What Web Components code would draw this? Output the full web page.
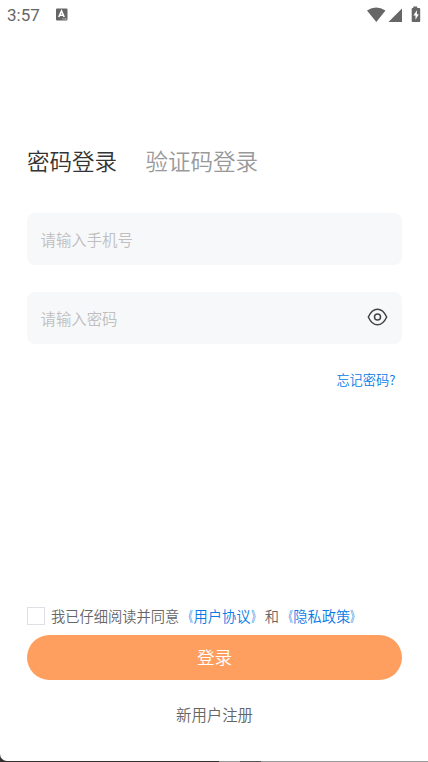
<!DOCTYPE html>
<html lang="zh-CN">
<head>
<meta charset="utf-8">
<title>密码登录</title>
<style>
html{background:#fff}
body{margin:0;width:428px;height:762px;overflow:hidden;font-family:"Noto Sans CJK SC DemiLight","Noto Sans CJK SC",sans-serif;font-weight:350}
</style>
</head>
<body>
<login-screen></login-screen>
<script>
function define(name, html) {
  const template = document.createElement('template');
  template.innerHTML = html.trim();
  customElements.define(name, class extends HTMLElement {
    constructor() {
      super();
      this.attachShadow({mode: 'open'}).append(template.content.cloneNode(true));
    }
  });
}

define('status-bar', `
<style>
:host{display:flex;align-items:center;height:30px;box-sizing:border-box;padding:0 7px 0 7px;color:#666}
time{font:400 17px/30px Roboto,sans-serif;width:49px;letter-spacing:0}
svg{display:block;fill:#666;margin-top:-1px}
.spacer{flex:1}
</style>
<time>3:57</time>
<svg width="12" height="13" viewBox="0 0 12 13"><rect y=".5" width="11.500" height="12" rx="1"/><path d="M2.800 9 5.500 3l2.700 6M3.800 7.300h3.400" fill="none" stroke="#fff" stroke-width="1.600"/><path d="M6.500 11h1M8.500 11h2" stroke="#ddd"/></svg>
<span class="spacer"></span>
<svg width="54" height="18" viewBox="0 0 54 18"><path d="M0 4.500Q9-1.500 18.500 4.500L9.300 16Z"/><path d="M35 2.500v13.500H21.500Z"/><path d="M46.300 2V.5h3.900V2h2.200q.8 0 .8.900v12.200q0 .9-.8.900h-6.900q-.8 0-.8-.9V2.900q0-.9.800-.9Z"/><path d="m49.900 4.300-3.500 5.300h2.100v4.200l3.300-5.600h-1.900Z" fill="#fff"/></svg>
`);

define('login-tabs', `
<style>
:host{display:flex;gap:28.500px;font-size:22.500px;line-height:34px;color:#999}
::slotted([active]){color:#333}
</style>
<slot></slot>`);

define('form-field', `
<style>
:host{display:flex;align-items:center;height:52px;box-sizing:border-box;padding:0 14px 0 13.500px;border-radius:8px;background:#f7f8fa;color:#bfbfbf;font-size:15.400px;line-height:24px}
.hint{flex:1}
</style>
<span class="hint"><slot></slot></span><slot name="action"></slot>`);

define('eye-icon', `
<style>:host{display:block;height:20px;margin-top:-2px}svg{display:block}</style>
<svg width="21" height="20" viewBox="0 0 21 20" fill="none" stroke="#444" stroke-width="1.500" stroke-linejoin="round"><path d="M1.300 10C3.600 5 7 2.200 10.500 2.200S17.400 5 19.700 10C17.400 15 14 17.800 10.500 17.800S3.600 15 1.300 10Z"/><circle cx="10.500" cy="10" r="3"/></svg>`);

define('text-link', `<style>:host{display:inline;color:#0a7be6}</style><slot></slot>`);

define('agreement-row', `
<style>
:host{display:flex;align-items:center;height:22px;font-size:14.250px;line-height:22px;color:#666;white-space:nowrap;text-spacing-trim:space-all}
i{box-sizing:border-box;width:18px;height:18px;border:1px solid #dfdfe5;margin-right:6px;flex:none}
</style>
<i></i><span><slot></slot></span>`);

define('policy-link', `
<style>
:host{display:inline;color:#0a7be6}
span{display:inline-block;transform:scaleX(.62)}
.open{transform-origin:94% 50%}
.close{transform-origin:6% 50%}
</style><span class="open">《</span><slot></slot><span class="close">》</span>`);

define('primary-button', `
<style>
:host{display:flex;align-items:center;justify-content:center;height:45px;border-radius:23px;background:#ff9f5f;color:#fff;font-size:17.600px;line-height:26px;box-sizing:border-box;padding-bottom:1px}
</style>
<slot></slot>`);

define('login-screen', `
<style>
:host{display:flex;flex-direction:column;width:428px;height:762px;background:linear-gradient(90deg,#33302f 0 219px,#999 219px 240px,#555 240px 261px,#999 261px)}
.page{display:flex;flex-direction:column;height:761px;background:#fff;border-radius:0 0 0 7px}
main{display:flex;flex-direction:column;flex:1;padding:113px 26px 0 27px}
login-tabs{margin-bottom:36px}
.second{margin-top:27px}
.forgot{align-self:flex-end;margin:26px 6.700px 0 0;font-size:13.200px;line-height:20px}
agreement-row{margin-top:215px}
primary-button{margin-top:8px}
.register{align-self:center;margin-top:22px;font-size:15.400px;line-height:24px;color:#666}
</style>
<div class="page">
<status-bar></status-bar>
<main>
<login-tabs><span active>密码登录</span><span>验证码登录</span></login-tabs>
<form-field>请输入手机号</form-field>
<form-field class="second">请输入密码<eye-icon slot="action"></eye-icon></form-field>
<text-link class="forgot">忘记密码?</text-link>
<agreement-row>我已仔细阅读并同意<policy-link>用户协议</policy-link>和<policy-link>隐私政策</policy-link></agreement-row>
<primary-button>登录</primary-button>
<span class="register">新用户注册</span>
</main>
</div>`);
</script>
</body>
</html>
